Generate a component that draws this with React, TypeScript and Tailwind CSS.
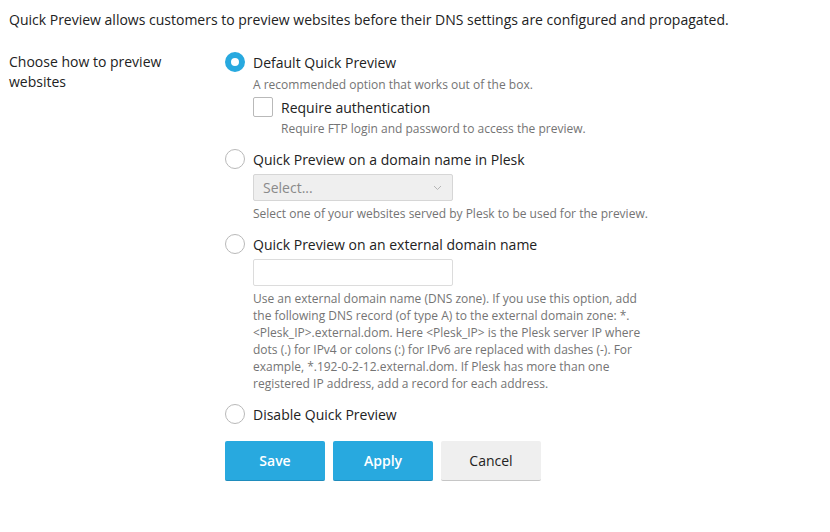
import { useState } from "react";

type Mode = "default" | "plesk" | "external" | "disable";

function Radio({ checked, onClick }: { checked: boolean; onClick: () => void }) {
  return (
    <button
      type="button"
      onClick={onClick}
      className={
        checked
          ? "h-5 w-5 shrink-0 rounded-full border-[6px] border-[#28a9df] bg-white"
          : "h-5 w-5 shrink-0 rounded-full border border-[#b9b9b9] bg-white"
      }
    />
  );
}

function Help({ children, className = "" }: { children: React.ReactNode; className?: string }) {
  return <p className={`text-[12px] leading-[17px] text-[#747474] ${className}`}>{children}</p>;
}

export default function App() {
  const [mode, setMode] = useState<Mode>("default");
  const [auth, setAuth] = useState(false);

  return (
    <div className="min-h-[532px] bg-white px-[9px] pt-[10px] text-[#222] [font-family:'Open_Sans',sans-serif]">
      <p className="text-[14px] leading-[20px]">
        Quick Preview allows customers to preview websites before their DNS settings are configured and propagated.
      </p>

      <div className="mt-[22px] flex">
        <div className="w-[216px] shrink-0 pr-4 text-[14px] leading-[20px]">Choose how to preview websites</div>

        <div className="flex flex-col">
          <label className="flex h-5 items-center gap-2 text-[14px]">
            <Radio checked={mode === "default"} onClick={() => setMode("default")} />
            Default Quick Preview
          </label>
          <div className="pl-7">
            <Help className="mt-[4px]">A recommended option that works out of the box.</Help>
            <label className="mt-[4px] flex h-5 items-center gap-2 text-[14px]">
              <button
                type="button"
                onClick={() => setAuth(!auth)}
                className="h-5 w-5 shrink-0 rounded-[2px] border border-[#b9b9b9] bg-white"
              />
              Require authentication
            </label>
            <Help className="mt-[3px] pl-7">Require FTP login and password to access the preview.</Help>
          </div>

          <label className="mt-[12px] flex h-5 items-center gap-2 text-[14px]">
            <Radio checked={mode === "plesk"} onClick={() => setMode("plesk")} />
            Quick Preview on a domain name in Plesk
          </label>
          <div className="pl-7">
            <div className="mt-[5px] flex h-[27px] w-[200px] items-center justify-between rounded-[2px] border border-[#d6d6d6] bg-[#efefef] pl-[9px] pr-[10px] text-[14px] text-[#8a8a8a]">
              <span>Select...</span>
              <svg width="9" height="6" viewBox="0 0 9 6" fill="none">
                <path d="M1 1l3.5 3.5L8 1" stroke="#b5b5b5" strokeWidth="1" />
              </svg>
            </div>
            <Help className="mt-[4px]">Select one of your websites served by Plesk to be used for the preview.</Help>
          </div>

          <label className="mt-[12px] flex h-5 items-center gap-2 text-[14px]">
            <Radio checked={mode === "external"} onClick={() => setMode("external")} />
            Quick Preview on an external domain name
          </label>
          <div className="pl-7">
            <div className="mt-[5px] h-[27px] w-[200px] rounded-[2px] border border-[#dcdcdc] bg-white" />
            <Help className="mt-[4px] w-[392px]">
              Use an external domain name (DNS zone). If you use this option, add the following DNS record (of type A)
              to the external domain zone: *.&lt;Plesk_IP&gt;.external.dom. Here &lt;Plesk_IP&gt; is the Plesk server IP
              where dots (.) for IPv4 or colons (:) for IPv6 are replaced with dashes (-). For example,
              *.192-0-2-12.external.dom. If Plesk has more than one registered IP address, add a record for each
              address.
            </Help>
          </div>

          <label className="mt-[12px] flex h-5 items-center gap-2 text-[14px]">
            <Radio checked={mode === "disable"} onClick={() => setMode("disable")} />
            Disable Quick Preview
          </label>

          <div className="mt-[17px] flex gap-[8px]">
            <button className="h-10 w-[100px] rounded-[2px] border-b border-[#1f8cbc] bg-[#28a9df] text-[14px] font-semibold text-white">
              Save
            </button>
            <button className="h-10 w-[100px] rounded-[2px] border-b border-[#1f8cbc] bg-[#28a9df] text-[14px] font-semibold text-white">
              Apply
            </button>
            <button className="h-10 w-[100px] rounded-[2px] border-b border-[#c6c6c6] bg-[#efefef] text-[14px] text-[#222]">
              Cancel
            </button>
          </div>
        </div>
      </div>
    </div>
  );
}
